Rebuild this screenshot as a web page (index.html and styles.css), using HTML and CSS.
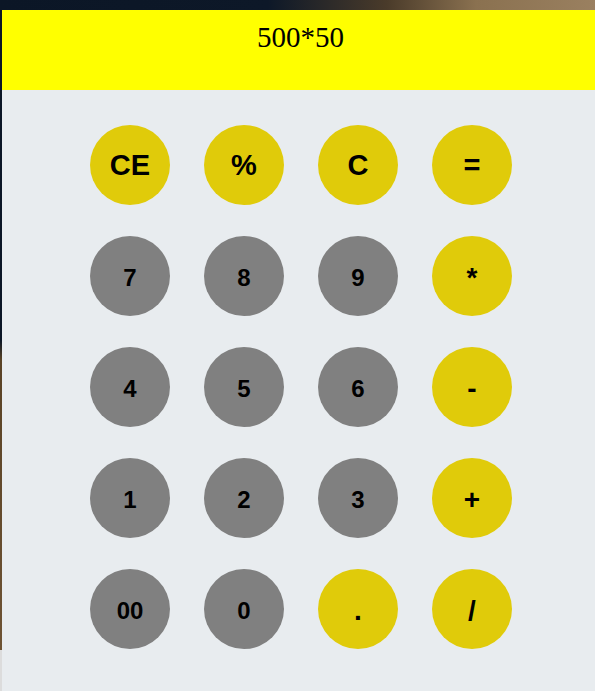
FILE: index.html
```html
<!DOCTYPE html>
<html lang="en">
<head>
<meta charset="utf-8">
<title>Calculator</title>
<link rel="stylesheet" href="styles.css">
</head>
<body>
<div class="calc">
  <div class="display">500*50</div>
  <div class="keys">
    <button class="key op big">CE</button>
    <button class="key op big">%</button>
    <button class="key op big">C</button>
    <button class="key op big">=</button>
    <button class="key num">7</button>
    <button class="key num">8</button>
    <button class="key num">9</button>
    <button class="key op">*</button>
    <button class="key num">4</button>
    <button class="key num">5</button>
    <button class="key num">6</button>
    <button class="key op">-</button>
    <button class="key num">1</button>
    <button class="key num">2</button>
    <button class="key num">3</button>
    <button class="key op">+</button>
    <button class="key num">00</button>
    <button class="key num">0</button>
    <button class="key op">.</button>
    <button class="key op">/</button>
  </div>
</div>
</body>
</html>
```
FILE: styles.css
```css
html {
  background: #dcdcdc;
}
body {
  margin: 0;
  height: 691px;
  overflow: hidden;
  background:
    linear-gradient(to bottom, #0b1626 0, #0b1626 340px, #5a4326 360px, #6e5334 650px, transparent 650px) left top / 2px 100% no-repeat,
    linear-gradient(to right, #0b1626 0, #0d1828 45%, #4a3b2a 65%, #8a7150 80%, #9a8060 100%) left top / 100% 10px no-repeat;
}
.calc {
  margin: 10px 0 0 2px;
  background: #e8ecef;
  height: 681px;
}
.display {
  height: 80px;
  box-sizing: border-box;
  padding: 11px 0 0 4px;
  background: #ffff00;
  text-align: center;
  font-family: "Liberation Serif", serif;
  font-size: 29px;
  color: #000;
}
.keys {
  display: grid;
  grid-template-columns: repeat(4, 80px);
  grid-auto-rows: 80px;
  column-gap: 34px;
  row-gap: 31px;
  padding: 35px 0 0 88px;
}
.key {
  width: 80px;
  height: 80px;
  border: none;
  border-radius: 50%;
  padding: 3px 0 0;
  margin: 0;
  font-family: "Liberation Sans", Arial, sans-serif;
  font-weight: bold;
  font-size: 24px;
  color: #000;
  display: flex;
  align-items: center;
  justify-content: center;
}
.key.op {
  font-size: 28px;
}
.key.big {
  font-size: 29px;
  padding-top: 0;
}
.num {
  background: #808080;
}
.op {
  background: #e0cb0a;
}
```
